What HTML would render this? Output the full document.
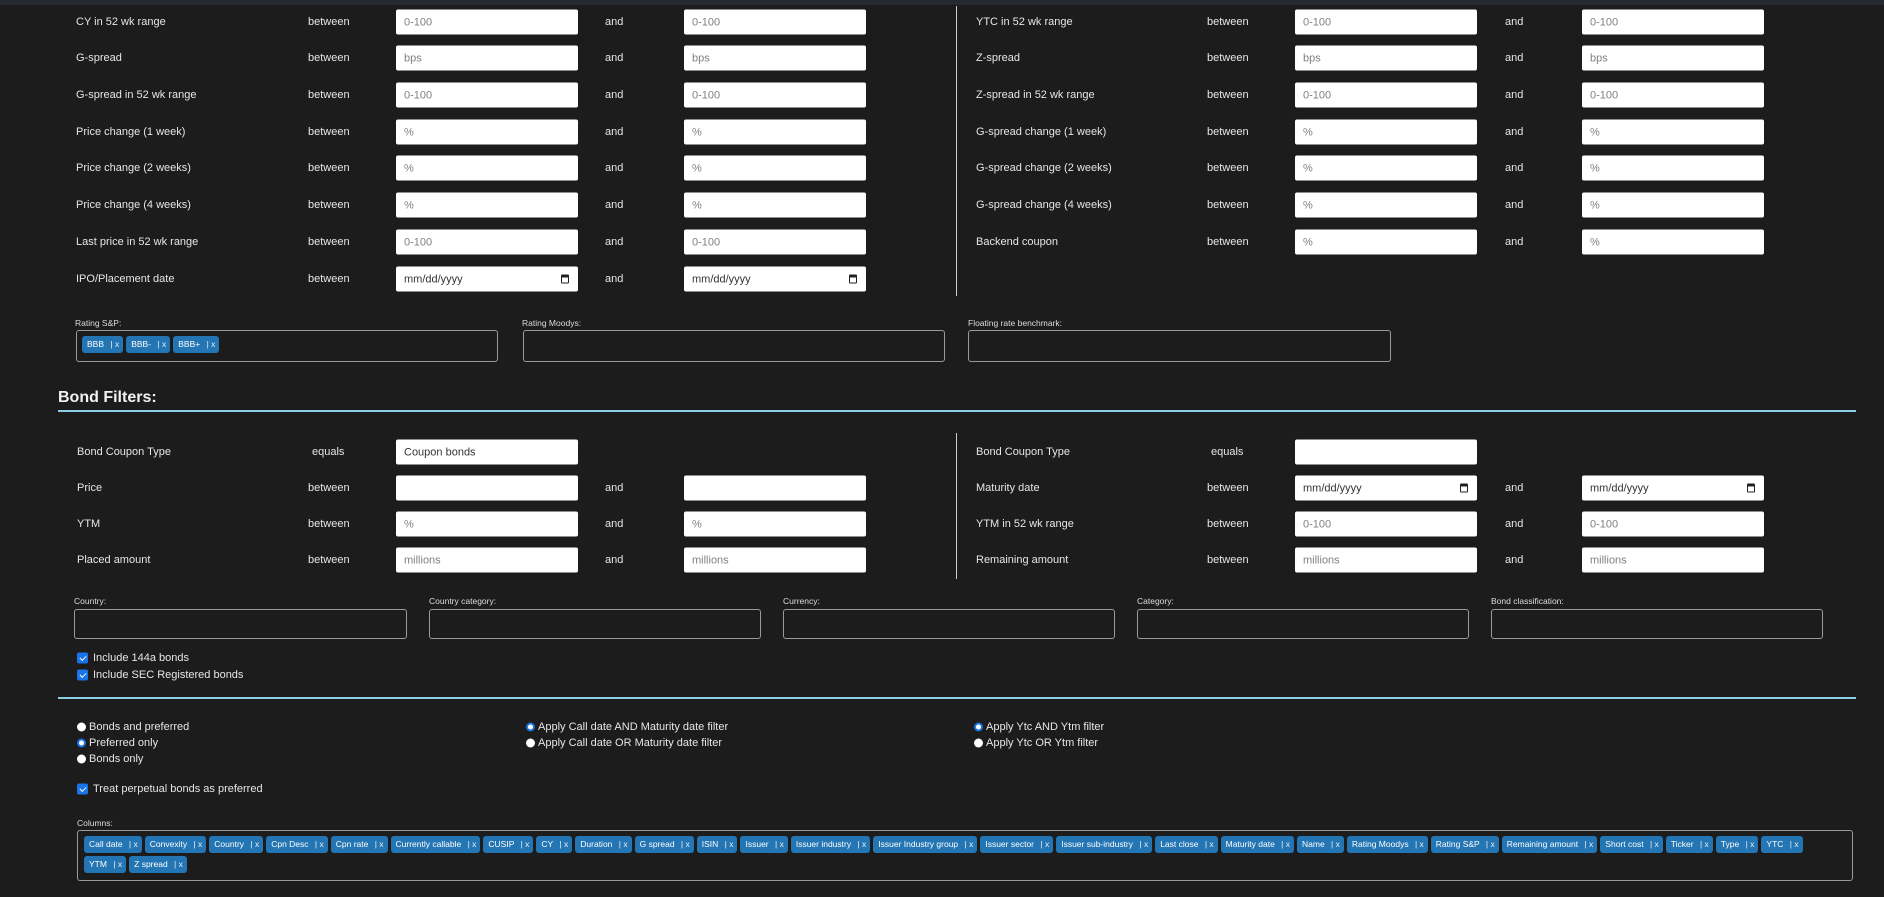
<!DOCTYPE html>
<html><head><meta charset="utf-8"><style>
*{box-sizing:border-box;margin:0;padding:0}
body{width:1884px;height:897px;background:#1c1c1c;font-family:"Liberation Sans",sans-serif;color:#e6e6e6;font-size:11px;position:relative;overflow:hidden}
.a{position:absolute;white-space:nowrap}
.t{transform:translateY(-50%)}
.in{position:absolute;width:182px;height:25px;background:#fff;border-radius:2px;color:#808080;font-size:11px;line-height:26px;padding-left:8px;transform:translateY(-50%)}
.in.v{color:#333}
.cal{position:absolute;right:9px;top:8px;width:8px;height:9px;border:1.5px solid #222;border-top-width:3px;border-radius:1px}
.box{position:absolute;border:1px solid #9a9a9a;border-radius:3px}
.lb{position:absolute;font-size:8.5px;color:#ddd}
.tag{display:inline-block;background:#2375b3;color:#fff;font-size:8.5px;height:17px;line-height:17px;padding:0 4px 0 5px;border-radius:3px;margin:0 3px 3px 0}
.tag b{font-weight:normal;margin-left:4px;opacity:.9}
.vl{position:absolute;width:1px;background:#ccc}
.hl{position:absolute;left:58px;width:1798px;height:2px;background:#8fcce6}
.cb{position:absolute;width:11px;height:11px;background:#1a73e8;border-radius:2px;transform:translateY(-50%)}
.cb:after{content:"";position:absolute;left:3.5px;top:1.5px;width:3px;height:5px;border:solid #fff;border-width:0 1.5px 1.5px 0;transform:rotate(45deg)}
.rd{position:absolute;width:9px;height:9px;border-radius:50%;background:#fff;transform:translateY(-50%)}
.rd.on{background:#fff;border:2.5px solid #1a73e8}
</style></head><body>
<div class="a" style="left:0;top:0;width:1884px;height:5px;background:#242932"></div>
<div class="vl" style="left:956px;top:6px;height:290px"></div>

<div class="a t" style="left:76px;top:22px">CY in 52 wk range</div><div class="a t" style="left:308px;top:22px">between</div><div class="in" style="left:396px;top:22px">0-100</div><div class="a t" style="left:605px;top:22px">and</div><div class="in" style="left:684px;top:22px">0-100</div>
<div class="a t" style="left:76px;top:58px">G-spread</div><div class="a t" style="left:308px;top:58px">between</div><div class="in" style="left:396px;top:58px">bps</div><div class="a t" style="left:605px;top:58px">and</div><div class="in" style="left:684px;top:58px">bps</div>
<div class="a t" style="left:76px;top:95px">G-spread in 52 wk range</div><div class="a t" style="left:308px;top:95px">between</div><div class="in" style="left:396px;top:95px">0-100</div><div class="a t" style="left:605px;top:95px">and</div><div class="in" style="left:684px;top:95px">0-100</div>
<div class="a t" style="left:76px;top:132px">Price change (1 week)</div><div class="a t" style="left:308px;top:132px">between</div><div class="in" style="left:396px;top:132px">%</div><div class="a t" style="left:605px;top:132px">and</div><div class="in" style="left:684px;top:132px">%</div>
<div class="a t" style="left:76px;top:168px">Price change (2 weeks)</div><div class="a t" style="left:308px;top:168px">between</div><div class="in" style="left:396px;top:168px">%</div><div class="a t" style="left:605px;top:168px">and</div><div class="in" style="left:684px;top:168px">%</div>
<div class="a t" style="left:76px;top:205px">Price change (4 weeks)</div><div class="a t" style="left:308px;top:205px">between</div><div class="in" style="left:396px;top:205px">%</div><div class="a t" style="left:605px;top:205px">and</div><div class="in" style="left:684px;top:205px">%</div>
<div class="a t" style="left:76px;top:242px">Last price in 52 wk range</div><div class="a t" style="left:308px;top:242px">between</div><div class="in" style="left:396px;top:242px">0-100</div><div class="a t" style="left:605px;top:242px">and</div><div class="in" style="left:684px;top:242px">0-100</div>
<div class="a t" style="left:76px;top:279px">IPO/Placement date</div><div class="a t" style="left:308px;top:279px">between</div><div class="in v" style="left:396px;top:279px">mm/dd/yyyy<span class="cal"></span></div><div class="a t" style="left:605px;top:279px">and</div><div class="in v" style="left:684px;top:279px">mm/dd/yyyy<span class="cal"></span></div>

<div class="a t" style="left:976px;top:22px">YTC in 52 wk range</div><div class="a t" style="left:1207px;top:22px">between</div><div class="in" style="left:1295px;top:22px">0-100</div><div class="a t" style="left:1505px;top:22px">and</div><div class="in" style="left:1582px;top:22px">0-100</div>
<div class="a t" style="left:976px;top:58px">Z-spread</div><div class="a t" style="left:1207px;top:58px">between</div><div class="in" style="left:1295px;top:58px">bps</div><div class="a t" style="left:1505px;top:58px">and</div><div class="in" style="left:1582px;top:58px">bps</div>
<div class="a t" style="left:976px;top:95px">Z-spread in 52 wk range</div><div class="a t" style="left:1207px;top:95px">between</div><div class="in" style="left:1295px;top:95px">0-100</div><div class="a t" style="left:1505px;top:95px">and</div><div class="in" style="left:1582px;top:95px">0-100</div>
<div class="a t" style="left:976px;top:132px">G-spread change (1 week)</div><div class="a t" style="left:1207px;top:132px">between</div><div class="in" style="left:1295px;top:132px">%</div><div class="a t" style="left:1505px;top:132px">and</div><div class="in" style="left:1582px;top:132px">%</div>
<div class="a t" style="left:976px;top:168px">G-spread change (2 weeks)</div><div class="a t" style="left:1207px;top:168px">between</div><div class="in" style="left:1295px;top:168px">%</div><div class="a t" style="left:1505px;top:168px">and</div><div class="in" style="left:1582px;top:168px">%</div>
<div class="a t" style="left:976px;top:205px">G-spread change (4 weeks)</div><div class="a t" style="left:1207px;top:205px">between</div><div class="in" style="left:1295px;top:205px">%</div><div class="a t" style="left:1505px;top:205px">and</div><div class="in" style="left:1582px;top:205px">%</div>
<div class="a t" style="left:976px;top:242px">Backend coupon</div><div class="a t" style="left:1207px;top:242px">between</div><div class="in" style="left:1295px;top:242px">%</div><div class="a t" style="left:1505px;top:242px">and</div><div class="in" style="left:1582px;top:242px">%</div>

<div class="lb" style="left:75px;top:318px">Rating S&amp;P:</div>
<div class="box" style="left:76px;top:330px;width:422px;height:32px;padding:5px 0 0 5px"><span class="tag">BBB <b>| x</b></span><span class="tag">BBB- <b>| x</b></span><span class="tag">BBB+ <b>| x</b></span></div>
<div class="lb" style="left:522px;top:318px">Rating Moodys:</div>
<div class="box" style="left:523px;top:330px;width:422px;height:32px"></div>
<div class="lb" style="left:968px;top:318px">Floating rate benchmark:</div>
<div class="box" style="left:968px;top:330px;width:423px;height:32px"></div>

<div class="a t" style="left:58px;top:398px;font-size:16px;font-weight:bold;color:#f2f2f2">Bond Filters:</div>
<div class="hl" style="top:410px"></div>

<div class="vl" style="left:956px;top:433px;height:146px"></div>
<div class="a t" style="left:77px;top:452px">Bond Coupon Type</div><div class="a t" style="left:312px;top:452px">equals</div><div class="in v" style="left:396px;top:452px">Coupon bonds</div>
<div class="a t" style="left:77px;top:488px">Price</div><div class="a t" style="left:308px;top:488px">between</div><div class="in" style="left:396px;top:488px"></div><div class="a t" style="left:605px;top:488px">and</div><div class="in" style="left:684px;top:488px"></div>
<div class="a t" style="left:77px;top:524px">YTM</div><div class="a t" style="left:308px;top:524px">between</div><div class="in" style="left:396px;top:524px">%</div><div class="a t" style="left:605px;top:524px">and</div><div class="in" style="left:684px;top:524px">%</div>
<div class="a t" style="left:77px;top:560px">Placed amount</div><div class="a t" style="left:308px;top:560px">between</div><div class="in" style="left:396px;top:560px">millions</div><div class="a t" style="left:605px;top:560px">and</div><div class="in" style="left:684px;top:560px">millions</div>

<div class="a t" style="left:976px;top:452px">Bond Coupon Type</div><div class="a t" style="left:1211px;top:452px">equals</div><div class="in" style="left:1295px;top:452px"></div>
<div class="a t" style="left:976px;top:488px">Maturity date</div><div class="a t" style="left:1207px;top:488px">between</div><div class="in v" style="left:1295px;top:488px">mm/dd/yyyy<span class="cal"></span></div><div class="a t" style="left:1505px;top:488px">and</div><div class="in v" style="left:1582px;top:488px">mm/dd/yyyy<span class="cal"></span></div>
<div class="a t" style="left:976px;top:524px">YTM in 52 wk range</div><div class="a t" style="left:1207px;top:524px">between</div><div class="in" style="left:1295px;top:524px">0-100</div><div class="a t" style="left:1505px;top:524px">and</div><div class="in" style="left:1582px;top:524px">0-100</div>
<div class="a t" style="left:976px;top:560px">Remaining amount</div><div class="a t" style="left:1207px;top:560px">between</div><div class="in" style="left:1295px;top:560px">millions</div><div class="a t" style="left:1505px;top:560px">and</div><div class="in" style="left:1582px;top:560px">millions</div>

<div class="lb" style="left:74px;top:596px">Country:</div><div class="box" style="left:74px;top:609px;width:333px;height:30px"></div>
<div class="lb" style="left:429px;top:596px">Country category:</div><div class="box" style="left:429px;top:609px;width:332px;height:30px"></div>
<div class="lb" style="left:783px;top:596px">Currency:</div><div class="box" style="left:783px;top:609px;width:332px;height:30px"></div>
<div class="lb" style="left:1137px;top:596px">Category:</div><div class="box" style="left:1137px;top:609px;width:332px;height:30px"></div>
<div class="lb" style="left:1491px;top:596px">Bond classification:</div><div class="box" style="left:1491px;top:609px;width:332px;height:30px"></div>

<div class="cb" style="left:77px;top:658px"></div><div class="a t" style="left:93px;top:658px">Include 144a bonds</div>
<div class="cb" style="left:77px;top:675px"></div><div class="a t" style="left:93px;top:675px">Include SEC Registered bonds</div>
<div class="hl" style="top:697px"></div>

<div class="rd" style="left:77px;top:727px"></div><div class="a t" style="left:89px;top:727px">Bonds and preferred</div>
<div class="rd on" style="left:77px;top:743px"></div><div class="a t" style="left:89px;top:743px">Preferred only</div>
<div class="rd" style="left:77px;top:759px"></div><div class="a t" style="left:89px;top:759px">Bonds only</div>
<div class="rd on" style="left:526px;top:727px"></div><div class="a t" style="left:538px;top:727px">Apply Call date AND Maturity date filter</div>
<div class="rd" style="left:526px;top:743px"></div><div class="a t" style="left:538px;top:743px">Apply Call date OR Maturity date filter</div>
<div class="rd on" style="left:974px;top:727px"></div><div class="a t" style="left:986px;top:727px">Apply Ytc AND Ytm filter</div>
<div class="rd" style="left:974px;top:743px"></div><div class="a t" style="left:986px;top:743px">Apply Ytc OR Ytm filter</div>

<div class="cb" style="left:77px;top:789px"></div><div class="a t" style="left:93px;top:789px">Treat perpetual bonds as preferred</div>

<div class="lb" style="left:77px;top:818px">Columns:</div>
<div class="box" style="left:77px;top:830px;width:1776px;height:51px;padding:5px 0 0 6px;white-space:nowrap;line-height:0;overflow:hidden">
<span class="tag">Call date <b>| x</b></span><span class="tag">Convexity <b>| x</b></span><span class="tag">Country <b>| x</b></span><span class="tag">Cpn Desc <b>| x</b></span><span class="tag">Cpn rate <b>| x</b></span><span class="tag">Currently callable <b>| x</b></span><span class="tag">CUSIP <b>| x</b></span><span class="tag">CY <b>| x</b></span><span class="tag">Duration <b>| x</b></span><span class="tag">G spread <b>| x</b></span><span class="tag">ISIN <b>| x</b></span><span class="tag">Issuer <b>| x</b></span><span class="tag">Issuer industry <b>| x</b></span><span class="tag">Issuer Industry group <b>| x</b></span><span class="tag">Issuer sector <b>| x</b></span><span class="tag">Issuer sub-industry <b>| x</b></span><span class="tag">Last close <b>| x</b></span><span class="tag">Maturity date <b>| x</b></span><span class="tag">Name <b>| x</b></span><span class="tag">Rating Moodys <b>| x</b></span><span class="tag">Rating S&amp;P <b>| x</b></span><span class="tag">Remaining amount <b>| x</b></span><span class="tag">Short cost <b>| x</b></span><span class="tag">Ticker <b>| x</b></span><span class="tag">Type <b>| x</b></span><span class="tag">YTC <b>| x</b></span><br><span class="tag">YTM <b>| x</b></span><span class="tag">Z spread <b>| x</b></span>
</div>
</body></html>
